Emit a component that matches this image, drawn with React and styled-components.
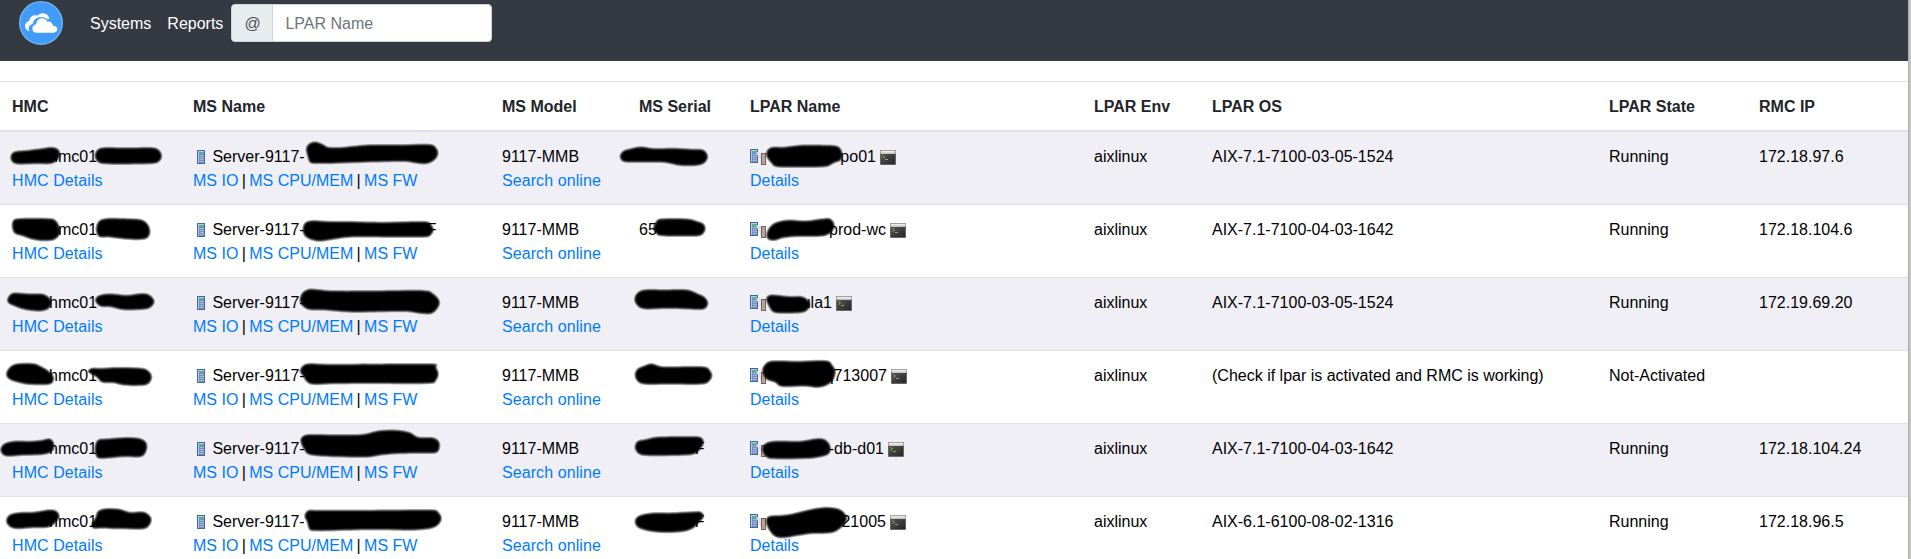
import React from "react";
import styled, { createGlobalStyle } from "styled-components";

const GlobalStyle = createGlobalStyle`
  *, *::before, *::after { box-sizing: border-box; }
  body {
    margin: 0;
    overflow: hidden;
    background: #fff;
    color: #212529;
    font: 400 16px/24px "Liberation Sans", Arial, sans-serif;
  }
`;

const Page = styled.div`
  display: flex;
  height: 559px;
  overflow: hidden;
`;

const Content = styled.main`
  flex: 1;
  min-width: 0;
`;

const ScrollEdge = styled.div`
  width: 3px;
  background: linear-gradient(to right, #aeaead 0 1px, #c4c5c3 1px);
`;

const Navbar = styled.nav`
  display: flex;
  align-items: flex-start;
  height: 61px;
  padding-left: 19px;
  background: #353a42;
`;

const Brand = styled.a`
  display: flex;
  margin: 1px 19px 0 0;
`;

const NavLink = styled.a`
  padding: 12px 8px 0;
  color: #fff;
`;

const SearchGroup = styled.div`
  display: flex;
  width: 261px;
  height: 38px;
  margin-top: 4px;
  overflow: hidden;
  border: 1px solid #ced4da;
  border-radius: 4px;
  background: #fff;
`;

const Addon = styled.span`
  width: 41px;
  padding: 7px 0 5px 12px;
  border-right: 1px solid #ced4da;
  background: #e9ecef;
  color: #495057;
`;

const SearchInput = styled.input`
  flex: 1;
  min-width: 0;
  padding: 7px 12px 5px;
  border: 0;
  outline: 0;
  background: transparent;
  color: #495057;
  font: inherit;
  &::placeholder { color: #6c757d; opacity: 1; }
`;

const Table = styled.table`
  width: 1908px;
  margin-top: 20px;
  border-spacing: 0;
  table-layout: fixed;
`;

const Col = styled.col`
  width: ${(p) => p.$width}px;
`;

const HeadCell = styled.th`
  padding: 13px 0 11px 12px;
  border-top: 1px solid #dee2e6;
  border-bottom: 2px solid #dee2e6;
  text-align: left;
  font-weight: 700;
`;

const Row = styled.tr`
  background: ${(p) => (p.$striped ? "#f0eff5" : "#fff")};
  &:not(:first-child) > td { border-top: 1px solid #dee2e6; }
`;

const Cell = styled.td`
  position: relative;
  height: 72px;
  padding: 13px 0 11px 12px;
  vertical-align: top;
  color: #000;
  white-space: nowrap;
  ${Row}:not(:first-child) > & { height: 73px; }
`;

const Line = styled.div`
  display: flex;
  height: 24px;
  margin-left: -1px;
  gap: 4.45px;
`;

const LinkLine = styled.div`
  word-spacing: -1.1px;
`;

const Link = styled.a`
  color: #007bff;
  word-spacing: 0;
  letter-spacing: ${(p) => (p.$loose ? "0.08px" : "normal")};
`;

const HiddenSpan = styled.span`
  display: inline-block;
  width: ${(p) => p.$width}px;
`;

const NameTail = styled.span`
  width: ${(p) => p.$width}px;
  text-align: right;
`;

const IconBox = styled.svg`
  flex: none;
  margin-top: ${(p) => p.$top}px;
`;

const BlotLayer = styled.svg`
  position: absolute;
  z-index: 1;
  top: 0;
  left: 0;
  overflow: visible;
  pointer-events: none;
`;

function CloudLogo() {
  return (
    <svg width="44" height="44" viewBox="0 0 132 132">
      <circle cx="66" cy="66" r="64" fill="#409cf8" stroke="#6fb5f8" strokeWidth="4" />
      <path
        d="M34 91C24 90 18 83 18 75c0-8 6-14 13-15 1-11 9-17 19-17 3 0 5 0 7 1 3-5 8-7 14-7 11 0 19 7 20 17-4 0-6 1-8 2-5-5-11-7-18-7-13 0-22 8-24 20-8 2-12 7-12 14 0 3 2 6 5 8z"
        fill="#fff"
      />
      <path
        d="M53 95c-8 0-13-5-13-12 0-7 5-12 12-13 0-11 8-18 17-18 8 0 13 4 16 10 9-2 16 4 17 12 8 0 13 4 13 11 0 6-5 10-11 10z"
        fill="#fff"
        stroke="#409cf8"
        strokeWidth="6"
        paintOrder="stroke"
      />
    </svg>
  );
}

function ServerIcon() {
  return (
    <IconBox $top={3} width="16" height="16" viewBox="0 0 16 16">
      <rect x="5" y="2" width="8" height="14" fill="#4166a8" />
      <rect x="6" y="3" width="6" height="12" fill="#b9c8e4" />
      <rect x="7" y="4" width="5" height="11" fill="#748fc0" />
      <rect x="7" y="4" width="4" height="1" fill="#16e636" />
      <path d="M8 7.5h4M8 9.5h4M8 11.5h4M8 13.5h4" stroke="#a6b6d5" />
    </IconBox>
  );
}

function PartitionIcon() {
  return (
    <IconBox $top={3} width="17" height="17" viewBox="0 0 17 17">
      <rect x="1" y="1" width="8" height="14" fill="#4166a8" />
      <rect x="2" y="2" width="6" height="12" fill="#b9c8e4" />
      <rect x="3" y="3" width="5" height="11" fill="#748fc0" />
      <rect x="3" y="3" width="4" height="1" fill="#16e636" />
      <path d="M4 6.5h4M4 8.5h4M4 10.5h4M4 12.5h4" stroke="#a6b6d5" />
      <path d="M7 4l5 1v10z" fill="#e4e5ec" />
      <rect x="12" y="5" width="5" height="12" fill="#756057" />
      <rect x="13" y="6" width="3" height="10" fill="#b7a49a" />
    </IconBox>
  );
}

function TerminalIcon() {
  return (
    <IconBox $top={5} width="16" height="15" viewBox="0 0 16 15">
      <defs>
        <linearGradient id="termBar" x2="0" y2="1">
          <stop stopColor="#777" />
          <stop offset=".35" stopColor="#eee" />
          <stop offset="1" stopColor="#bbb" />
        </linearGradient>
        <linearGradient id="termBody" x2="1" y2="1">
          <stop stopColor="#555" />
          <stop offset="1" stopColor="#262626" />
        </linearGradient>
      </defs>
      <rect width="16" height="15" rx="1" fill="#666" />
      <rect x=".5" width="15" height="4" fill="url(#termBar)" />
      <rect x="1" y="4" width="14" height="10" fill="url(#termBody)" />
      <path d="M2.5 5.5l2 1.5-2 1.5M5 9.5h3" fill="none" stroke="#7fae53" />
    </IconBox>
  );
}

/* Closed smooth curve through the points (Catmull-Rom to Bézier). */
function smoothPath(points) {
  const n = points.length;
  const at = (i) => points[(i + n) % n];
  let d = `M${at(0)[0]} ${at(0)[1]}`;
  for (let i = 0; i < n; i++) {
    const [a, b, c, e] = [at(i - 1), at(i), at(i + 1), at(i + 2)];
    d += `C${b[0] + (c[0] - a[0]) / 6} ${b[1] + (c[1] - a[1]) / 6} ${c[0] - (e[0] - b[0]) / 6} ${c[1] - (e[1] - b[1]) / 6} ${c[0]} ${c[1]}`;
  }
  return d + "Z";
}

/* Marker strokes are stored in thirds of a pixel; origin shifts them into the cell. */
function Blots({ shapes, origin = 0 }) {
  return (
    <BlotLayer width="1" height="1">
      <defs>
        <filter id="markerEdge" x="-10%" y="-20%" width="120%" height="140%">
          <feGaussianBlur stdDeviation="4.2" />
          <feComponentTransfer>
            <feFuncA type="linear" slope="1.5" intercept="-0.47" />
          </feComponentTransfer>
        </filter>
      </defs>
      <g transform={`scale(.33333) translate(${origin} 0)`}>
        {shapes.map((s, i) => (
          <path key={i} d={smoothPath(s)} filter="url(#markerEdge)" />
        ))}
      </g>
    </BlotLayer>
  );
}

const rows = [
  {
    tail: "po01", tailWidth: 105.5, os: "AIX-7.1-7100-03-05-1524", state: "Running", ip: "172.18.97.6",
    hmc: [
      [[30,76],[42,58],[85,53],[125,48],[150,44],[172,48],[182,65],[174,84],[155,96],[110,97],[60,98],[38,93]],
      [[283,70],[292,52],[315,45],[380,46],[455,45],[478,53],[487,71],[480,88],[460,96],[380,98],[310,97],[290,88]],
    ],
    ms: [[[917,50],[925,35],[945,28],[970,36],[985,44],[1030,44],[1110,37],[1200,37],[1290,36],[1308,45],[1316,62],[1308,82],[1285,96],[1255,96],[1210,90],[1100,92],[1010,95],[955,96],[930,94],[922,75]]],
    serial: [[[418,72],[430,55],[455,48],[485,43],[520,48],[580,47],[640,50],[670,52],[685,72],[675,94],[650,102],[600,102],[555,93],[500,92],[440,92],[424,86]]],
    lpar: [[[857,62],[872,45],[910,44],[960,38],[1040,38],[1075,42],[1088,62],[1084,85],[1060,95],[1035,106],[960,107],[890,106],[872,92],[862,80]]],
  },
  {
    tail: "prod-wc", tailWidth: 115.5, serialHead: "65", msTail: true, os: "AIX-7.1-7100-04-03-1642", state: "Running", ip: "172.18.104.6",
    hmc: [
      [[35,55],[42,42],[65,39],[140,39],[165,43],[180,65],[182,85],[165,105],[130,109],[95,104],[70,95],[45,88],[36,72]],
      [[287,70],[295,48],[320,39],[385,40],[425,43],[445,58],[452,80],[445,98],[425,105],[380,104],[330,98],[300,98],[290,88]],
    ],
    ms: [[[907,72],[915,52],[940,45],[990,48],[1050,48],[1150,50],[1270,48],[1292,55],[1302,75],[1292,92],[1270,98],[1150,98],[1050,98],[1010,103],[980,108],[955,110],[930,104],[912,92]]],
    serial: [[[518,70],[528,48],[545,40],[620,40],[650,47],[670,54],[678,70],[670,88],[650,95],[580,95],[540,94],[528,86]]],
    lpar: [[[858,92],[865,70],[885,52],[920,44],[980,46],[1025,40],[1050,39],[1064,55],[1062,75],[1040,92],[1000,96],[950,96],[910,100],[885,108],[865,105]]],
  },
  {
    tail: "ula1", tailWidth: 61.5, os: "AIX-7.1-7100-03-05-1524", state: "Running", ip: "172.19.69.20",
    hmc: [
      [[20,66],[28,50],[45,43],[85,46],[125,46],[145,55],[156,70],[150,90],[130,100],[100,100],[65,94],[40,84],[26,78]],
      [[284,68],[295,52],[330,46],[380,50],[425,45],[450,50],[465,70],[452,90],[425,96],[370,97],[330,88],[300,86]],
    ],
    ms: [[[898,70],[905,45],[925,32],[955,33],[1000,37],[1120,37],[1270,36],[1300,46],[1320,68],[1315,90],[1295,108],[1260,108],[1210,102],[1060,104],[980,98],[930,97],[910,88]]],
    serial: [[[462,66],[470,45],[495,34],[560,34],[620,34],[650,44],[675,56],[686,76],[675,94],[650,96],[570,93],[500,95],[475,88]]],
    lpar: [[[857,62],[868,50],[895,50],[930,54],[965,54],[985,65],[992,80],[982,98],[960,106],[910,107],[880,104],[868,90]]],
  },
  {
    tail: "q713007", tailWidth: 116.5, os: "(Check if lpar is activated and RMC is working)", state: "Not-Activated", ip: "",
    hmc: [
      [[17,72],[26,50],[50,37],[100,36],[125,46],[145,58],[162,76],[160,94],[145,102],[90,102],[55,96],[30,88]],
      [[262,62],[275,50],[310,50],[350,48],[425,50],[448,60],[457,78],[448,98],[425,105],[370,104],[340,97],[305,95],[290,80]],
    ],
    ms: [[[898,60],[908,43],[930,36],[1000,38],[1290,37],[1308,48],[1317,68],[1308,90],[1285,99],[1100,99],[1000,100],[940,102],[918,92],[908,76]]],
    serial: [[[463,72],[472,52],[495,42],[515,36],[540,44],[570,46],[670,46],[690,56],[698,74],[688,92],[665,101],[570,101],[495,101],[472,92]]],
    lpar: [[[845,60],[855,38],[880,28],[960,29],[1040,28],[1058,42],[1068,60],[1062,85],[1045,102],[1015,111],[975,107],[905,108],[885,95],[858,86]]],
  },
  {
    tail: "-db-d01", tailWidth: 113.5, serialTail: true, os: "AIX-7.1-7100-04-03-1642", state: "Running", ip: "172.18.104.24",
    hmc: [
      [[0,75],[12,58],[40,50],[90,50],[125,47],[148,42],[162,54],[163,75],[150,88],[120,94],[60,96],[20,98],[5,90]],
      [[284,65],[294,46],[320,43],[380,39],[420,42],[440,55],[442,75],[432,95],[410,101],[370,100],[300,105],[286,92]],
    ],
    ms: [[[900,50],[910,34],[935,30],[1020,31],[1090,29],[1140,18],[1190,17],[1230,24],[1255,38],[1300,40],[1318,52],[1320,72],[1308,88],[1260,89],[1200,90],[1150,94],[1100,101],[1000,100],[930,94],[912,78]]],
    serial: [[[463,70],[472,50],[500,44],[540,37],[640,36],[665,40],[673,56],[662,76],[642,92],[580,96],[495,96],[472,88]]],
    lpar: [[[845,74],[855,58],[880,50],[960,50],[1005,43],[1035,45],[1052,65],[1050,88],[1030,98],[980,105],[880,106],[856,98]]],
  },
  {
    tail: "21005", tailWidth: 115.5, serialTail: true, os: "AIX-6.1-6100-08-02-1316", state: "Running", ip: "172.18.96.5",
    hmc: [
      [[17,72],[28,52],[60,45],[100,44],[150,37],[172,42],[180,60],[165,80],[145,92],[100,94],[50,97],[28,90]],
      [[272,82],[285,62],[292,42],[315,34],[360,35],[390,44],[430,43],[450,55],[456,70],[446,90],[425,98],[360,97],[300,95],[280,96]],
    ],
    ms: [[[912,58],[922,40],[950,38],[1100,38],[1290,37],[1315,44],[1326,62],[1318,82],[1295,95],[1230,101],[1100,100],[945,103],[925,92],[920,75]]],
    serial: [[[463,74],[474,56],[510,47],[580,46],[640,43],[665,44],[673,60],[660,75],[640,95],[610,105],[560,108],[510,104],[475,94]]],
    lpar: [[[857,68],[868,56],[920,52],[980,38],[1035,29],[1075,34],[1095,48],[1102,68],[1085,92],[1055,109],[1000,111],[960,116],[910,124],[885,120],[870,105],[860,88]]],
  },
];

const columns = [
  ["HMC", 181], ["MS Name", 309], ["MS Model", 137], ["MS Serial", 111], ["LPAR Name", 344],
  ["LPAR Env", 118], ["LPAR OS", 397], ["LPAR State", 150], ["RMC IP", 161],
];

function LparRow({ row, striped }) {
  return (
    <Row $striped={striped}>
      <Cell>
        <div><HiddenSpan $width={37} />hmc01</div>
        <Link $loose>HMC Details</Link>
        <Blots shapes={row.hmc} />
      </Cell>
      <Cell>
        <Line>
          <ServerIcon />
          <span>Server-9117-{row.msTail && <><HiddenSpan $width={122} />F</>}</span>
        </Line>
        <LinkLine>
          <Link>MS IO</Link> | <Link>MS CPU/MEM</Link> | <Link>MS FW</Link>
        </LinkLine>
        <Blots shapes={row.ms} origin={-543} />
      </Cell>
      <Cell>
        <div>9117-MMB</div>
        <Link $loose>Search online</Link>
      </Cell>
      <Cell>
        {row.serialHead}
        {row.serialTail && <><HiddenSpan $width={55.8} />F</>}
        <Blots shapes={row.serial} origin={-441} />
      </Cell>
      <Cell>
        <Line>
          <PartitionIcon />
          <NameTail $width={row.tailWidth}>{row.tail}</NameTail>
          <TerminalIcon />
        </Line>
        <Link>Details</Link>
        <Blots shapes={row.lpar} origin={-774} />
      </Cell>
      <Cell>aixlinux</Cell>
      <Cell>{row.os}</Cell>
      <Cell>{row.state}</Cell>
      <Cell>{row.ip}</Cell>
    </Row>
  );
}

export default function App() {
  return (
    <Page>
      <GlobalStyle />
      <Content>
        <Navbar>
          <Brand><CloudLogo /></Brand>
          <NavLink>Systems</NavLink>
          <NavLink>Reports</NavLink>
          <SearchGroup>
            <Addon>@</Addon>
            <SearchInput placeholder="LPAR Name" />
          </SearchGroup>
        </Navbar>
        <Table>
          <colgroup>
            {columns.map(([name, width]) => <Col key={name} $width={width} />)}
          </colgroup>
          <thead>
            <tr>{columns.map(([name]) => <HeadCell key={name}>{name}</HeadCell>)}</tr>
          </thead>
          <tbody>
            {rows.map((row, i) => <LparRow key={i} row={row} striped={i % 2 === 0} />)}
          </tbody>
        </Table>
      </Content>
      <ScrollEdge />
    </Page>
  );
}
